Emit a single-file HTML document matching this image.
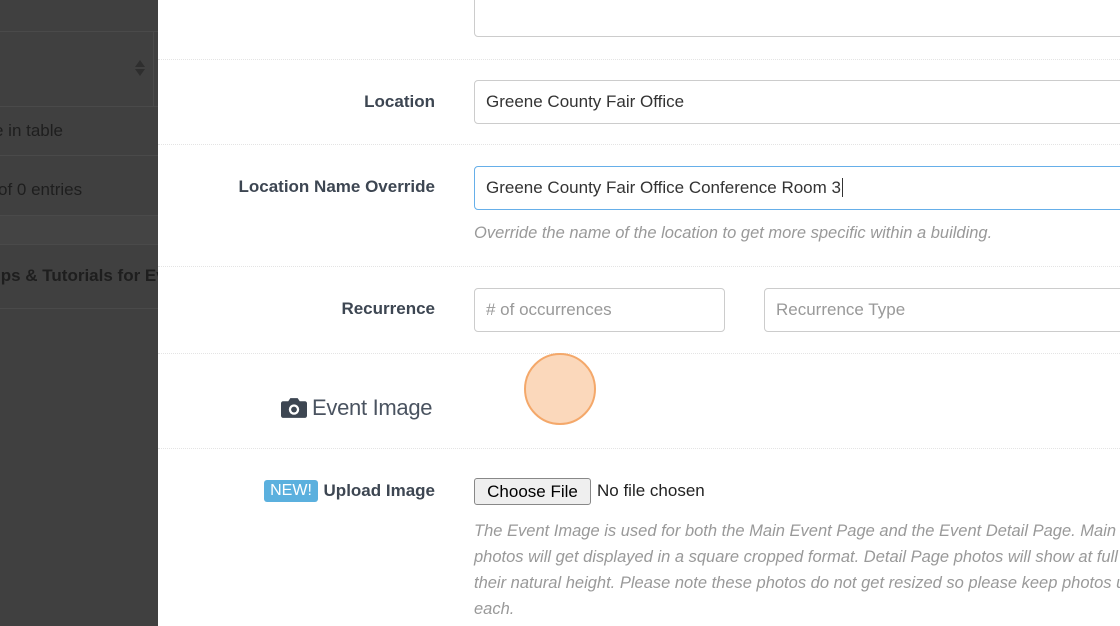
<!DOCTYPE html>
<html><head><style>
body{margin:0;width:1120px;height:626px;overflow:hidden;background:#fff;font-family:"Liberation Sans",sans-serif;position:relative}
.a{position:absolute}
.dark{left:0;top:0;width:158px;height:626px;background:#404040;overflow:hidden}
.dl{left:0;width:158px;height:1px;background:#4a4a4a}
.dt{color:#1e1e1e;font-size:17px;white-space:nowrap}
.sep{left:158px;width:962px;border-top:1px dotted #e4e4e4;height:0}
.lbl{right:685px;text-align:right;font-weight:bold;color:#3d4652;font-size:17px;white-space:nowrap}
.inp{box-sizing:border-box;border:1px solid #ccc;border-radius:4px;height:44px;font-size:17px;color:#333;padding:11px 11px;white-space:nowrap}
.help{color:#999;font-style:italic;font-size:16.5px;white-space:nowrap}
</style></head><body>
<div class="a dark">
<div class="a dl" style="top:31px"></div>
<div class="a dl" style="top:106px"></div>
<div class="a" style="left:153px;top:31px;width:1px;height:75px;background:#4a4a4a"></div>
<div class="a dl" style="top:155px"></div>
<div class="a" style="left:0;top:215px;width:158px;height:28px;background:#444;border-top:1px solid #4a4a4a;border-bottom:1px solid #4a4a4a"></div>
<div class="a dl" style="top:308px"></div>
<div class="a" style="left:135px;top:60px;width:0;height:0;border-left:5px solid transparent;border-right:5px solid transparent;border-bottom:7px solid #2e2e2e"></div>
<div class="a" style="left:135px;top:69px;width:0;height:0;border-left:5px solid transparent;border-right:5px solid transparent;border-top:7px solid #2e2e2e"></div>
<div class="a dt" style="left:-6px;top:121px">e in table</div>
<div class="a dt" style="left:-2px;top:180px">of 0 entries</div>
<div class="a dt" style="left:-4px;top:266px;font-weight:bold">ips &amp; Tutorials for Ev</div>
</div>

<div class="a inp" style="left:474px;top:-8px;width:660px;height:45px"></div>
<div class="a sep" style="top:59px"></div>
<div class="a lbl" style="top:92px">Location</div>
<div class="a inp" style="left:474px;top:80px;width:660px">Greene County Fair Office</div>
<div class="a sep" style="top:144px"></div>
<div class="a lbl" style="top:177px">Location Name Override</div>
<div class="a inp" style="left:474px;top:166px;width:660px;border-color:#66afe9">Greene County Fair Office Conference Room 3<span style="border-left:1px solid #333;margin-left:1px"></span></div>
<div class="a help" style="left:474px;top:224px">Override the name of the location to get more specific within a building.</div>
<div class="a sep" style="top:266px"></div>
<div class="a lbl" style="top:299px">Recurrence</div>
<div class="a inp" style="left:474px;top:288px;width:251px;color:#999">#&nbsp;of occurrences</div>
<div class="a inp" style="left:764px;top:288px;width:370px;color:#999">Recurrence Type</div>
<div class="a sep" style="top:353px"></div>
<svg class="a" style="left:281px;top:397px" width="26" height="22" viewBox="0 0 25 21"><path d="M2 4h5l2-3h7l2 3h5a2 2 0 0 1 2 2v12a2 2 0 0 1-2 2H2a2 2 0 0 1-2-2V6a2 2 0 0 1 2-2z" fill="#3d4652"/><circle cx="12.5" cy="12" r="5" fill="#fff"/><circle cx="12.5" cy="12" r="2.8" fill="#3d4652"/></svg>
<div class="a" style="left:312px;top:395px;font-size:22px;color:#4a5360;letter-spacing:-0.3px">Event Image</div>
<div class="a" style="left:524px;top:353px;width:68px;height:68px;border-radius:50%;background:#fbd8bb;border:2px solid #f4a86a"></div>
<div class="a sep" style="top:448px"></div>
<div class="a" style="left:264px;top:480px;width:54px;height:22px;background:#5bb0de;color:#fff;font-size:16px;text-align:center;line-height:22px;border-radius:3px">NEW!</div>
<div class="a lbl" style="top:481px">Upload Image</div>
<div class="a" style="left:474px;top:478px;width:117px;height:27px;box-sizing:border-box;border:1px solid #888;border-radius:3px;background:#efefef;font-size:17px;text-align:center;line-height:25px;color:#000">Choose File</div>
<div class="a" style="left:597px;top:481px;font-size:17px;color:#222">No file chosen</div>
<div class="a help" style="left:474px;top:518px;line-height:26px">The Event Image is used for both the Main Event Page and the Event Detail Page. Main E<br>photos will get displayed in a square cropped format. Detail Page photos will show at full<br>their natural height. Please note these photos do not get resized so please keep photos ur<br>each.</div>
</body></html>
